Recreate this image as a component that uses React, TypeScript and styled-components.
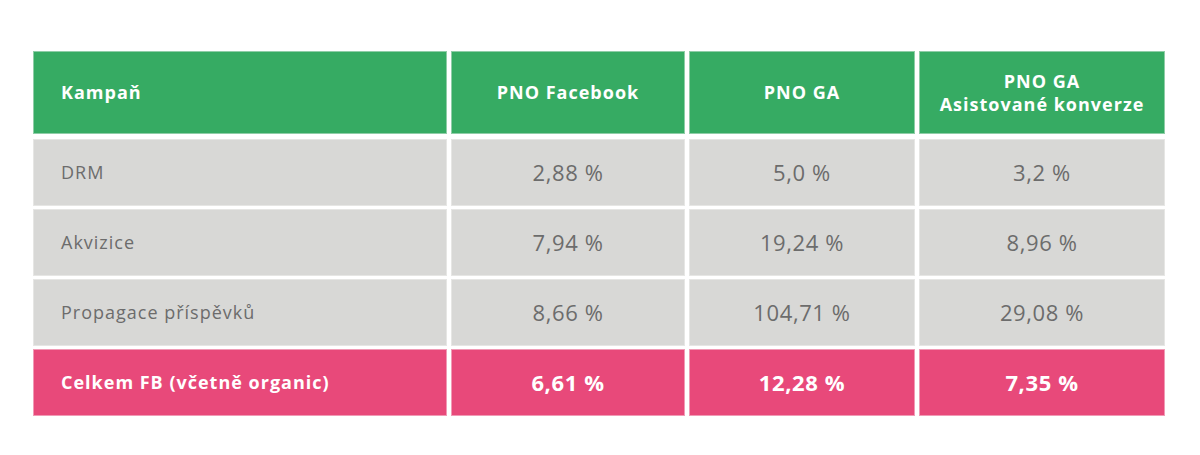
import React from "react";
import styled, { createGlobalStyle } from "styled-components";

const Global = createGlobalStyle`
  html, body { margin: 0; padding: 0; background: #ffffff; }
  body { font-family: "Open Sans", "Noto Sans", sans-serif; }
`;

const Page = styled.div`
  width: 1200px;
  height: 455px;
  padding: 51px 0 0 33px;
  box-sizing: border-box;
`;

const Table = styled.div`
  display: grid;
  grid-template-columns: 414px 234px 226px 246px;
  grid-template-rows: 85px 67px 67px 67px 67px;
  column-gap: 4px;
  row-gap: 3px;
`;

type Variant = "head" | "body" | "total";

const bg: Record<Variant, string> = {
  head: "#36ab63",
  body: "#d8d8d6",
  total: "#e8497a",
};
const edge: Record<Variant, string> = {
  head: "#8fcda7",
  body: "#e6e6e4",
  total: "#f19ab5",
};

const Cell = styled.div<{ $v: Variant; $first?: boolean; $headGap?: boolean }>`
  background: ${(p) => bg[p.$v]};
  border: 1px solid ${(p) => edge[p.$v]};
  margin-bottom: ${(p) => (p.$headGap ? "2px" : "0")};
  display: flex;
  align-items: center;
  justify-content: ${(p) => (p.$first ? "flex-start" : "center")};
  text-align: ${(p) => (p.$first ? "left" : "center")};
  padding-left: ${(p) => (p.$first ? "27px" : "0")};
  color: ${(p) => (p.$v === "body" ? "#6c6c6c" : "#ffffff")};
  font-weight: ${(p) => (p.$v === "body" ? 400 : 700)};
  font-size: ${(p) => (p.$v === "head" || p.$first ? "18px" : "22px")};
  letter-spacing: ${(p) => (p.$v === "head" || p.$first ? "1px" : "0.6px")};
  line-height: 23px;
  box-sizing: border-box;
`;

const rows: { label: string; vals: string[] }[] = [
  { label: "DRM", vals: ["2,88 %", "5,0 %", "3,2 %"] },
  { label: "Akvizice", vals: ["7,94 %", "19,24 %", "8,96 %"] },
  { label: "Propagace příspěvků", vals: ["8,66 %", "104,71 %", "29,08 %"] },
];

export default function App() {
  return (
    <Page>
      <Global />
      <Table>
        <Cell $v="head" $first $headGap>Kampaň</Cell>
        <Cell $v="head" $headGap>PNO Facebook</Cell>
        <Cell $v="head" $headGap>PNO GA</Cell>
        <Cell $v="head" $headGap>
          PNO GA
          <br />
          Asistované konverze
        </Cell>
        {rows.map((r) => (
          <React.Fragment key={r.label}>
            <Cell $v="body" $first>{r.label}</Cell>
            {r.vals.map((v, i) => (
              <Cell $v="body" key={i}>{v}</Cell>
            ))}
          </React.Fragment>
        ))}
        <Cell $v="total" $first>Celkem FB (včetně organic)</Cell>
        <Cell $v="total">6,61 %</Cell>
        <Cell $v="total">12,28 %</Cell>
        <Cell $v="total">7,35 %</Cell>
      </Table>
    </Page>
  );
}
